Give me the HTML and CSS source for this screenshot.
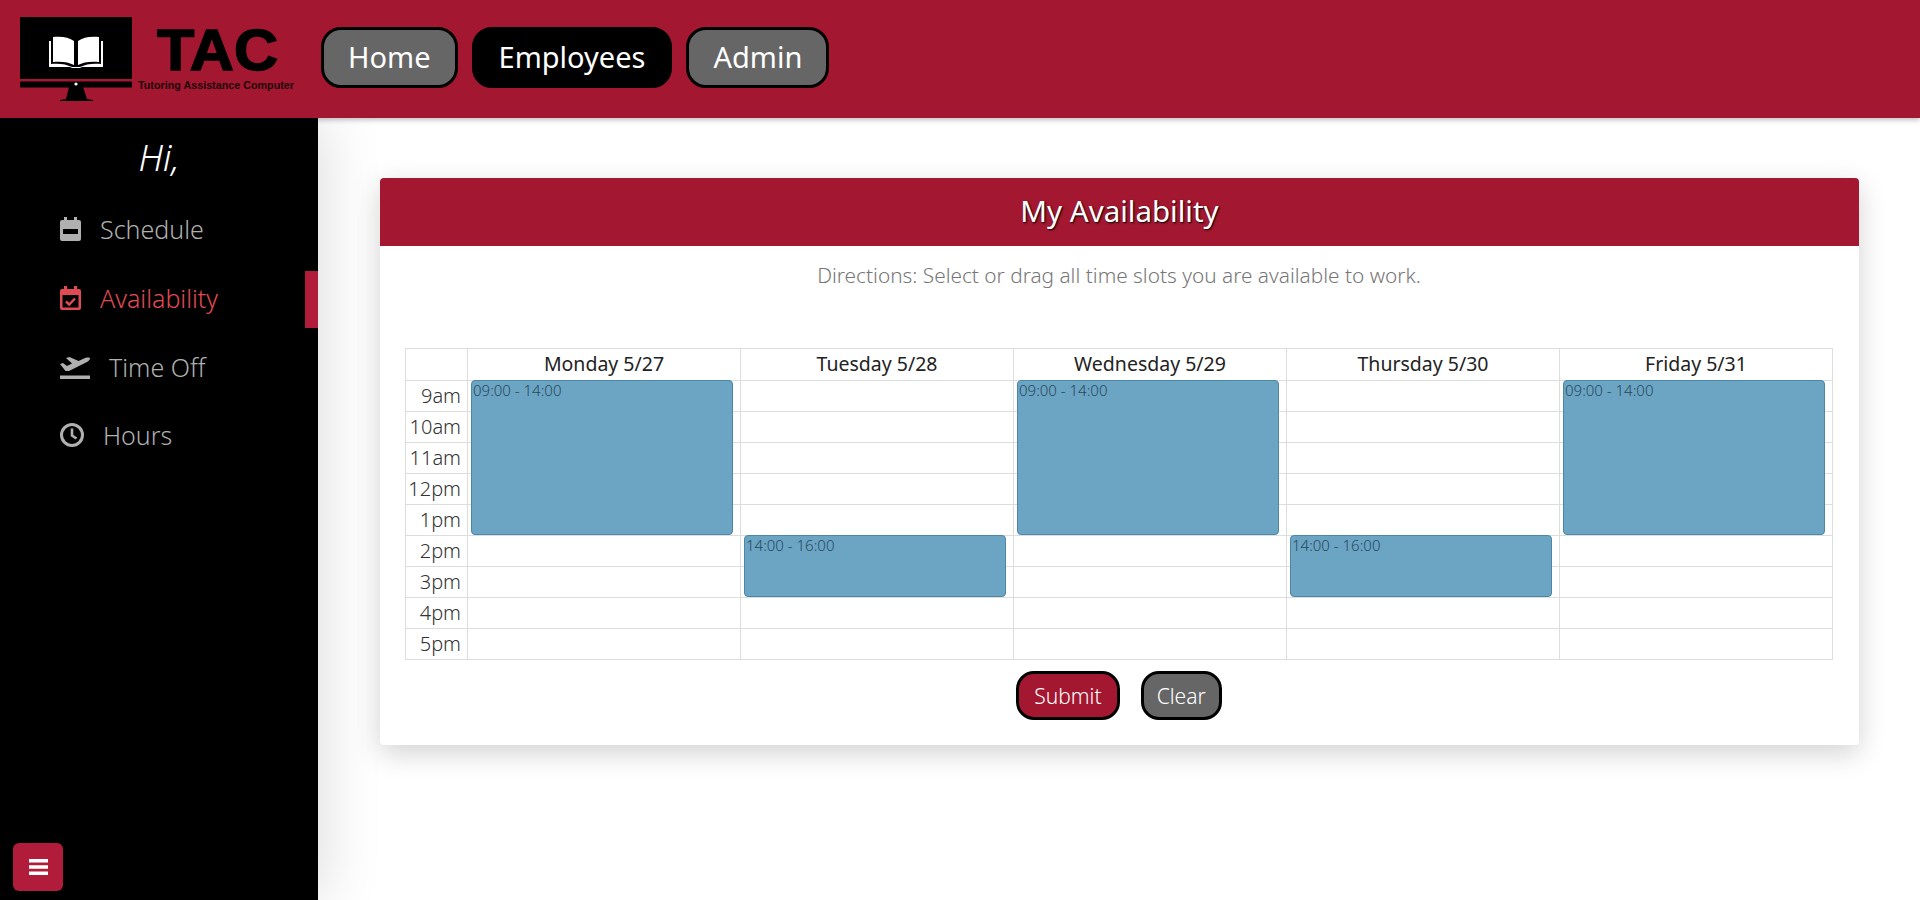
FILE: index.html
```html
<!DOCTYPE html>
<html lang="en">
<head>
  <meta charset="UTF-8" />
  <meta name="viewport" content="width=device-width, initial-scale=1.0"/>
  <title>TAC - My Availability</title>
  <link rel="stylesheet" href="styles.css">
</head>
<body>
  <header class="topbar">
    <svg class="logo" width="290" height="92" viewBox="0 0 290 92">
      <rect x="0" y="0" width="112" height="62" rx="1" fill="#000"/>
      <rect x="0" y="64.500" width="112" height="6" rx="1" fill="#000"/>
      <path d="M49 70h14l4 12 6 1v1H40v-1l6-1z" fill="#000"/>
      <circle cx="56" cy="67" r="1.600" fill="#fff"/>
      <path d="M33 20c8-1 16 0 21 4v24c-5-3-13-4-21-3z" fill="#fff"/>
      <path d="M79 20c-8-1-16 0-21 4v24c5-3 13-4 21-3z" fill="#fff"/>
      <path d="M29 24h2v23c8-1 15 0 21 3h8c6-3 13-4 21-3V24h2v26H62l-2 1h-8l-2-1H29z" fill="#fff"/>
      <text class="logo-title" x="137" y="53" textLength="121" lengthAdjust="spacingAndGlyphs">TAC</text>
      <text class="logo-sub" x="118" y="72" textLength="156" lengthAdjust="spacingAndGlyphs">Tutoring Assistance Computer</text>
    </svg>
    <nav class="topnav">
      <a class="nav-btn" href="#">Home</a>
      <a class="nav-btn active" href="#">Employees</a>
      <a class="nav-btn" href="#">Admin</a>
    </nav>
  </header>

  <div class="shell">
    <aside class="sidebar">
      <p class="greeting">Hi,</p>
      <ul class="side-menu">
        <li class="side-item">
          <svg class="side-icon" width="21" height="24" viewBox="0 0 21 24"><path d="M4 0h3v3h7V0h3v3h2a2 2 0 0 1 2 2v17a2 2 0 0 1-2 2H2a2 2 0 0 1-2-2V5a2 2 0 0 1 2-2h2z" fill="currentColor"/><rect x="3" y="12" width="15" height="5" fill="#000"/></svg>
          <span>Schedule</span>
        </li>
        <li class="side-item current">
          <svg class="side-icon" width="21" height="24" viewBox="0 0 21 24"><path d="M4 0h3v3h7V0h3v3h2a2 2 0 0 1 2 2v17a2 2 0 0 1-2 2H2a2 2 0 0 1-2-2V5a2 2 0 0 1 2-2h2zM2.500 9v12.500h16V9z" fill="currentColor" fill-rule="evenodd"/><path d="M6 15.500l3.200 3 5.800-6" fill="none" stroke="currentColor" stroke-width="2.400"/></svg>
          <span>Availability</span>
        </li>
        <li class="side-item">
          <svg class="side-icon" width="30" height="24" viewBox="0 0 30 24"><path d="M0 9l3-1 4 3 5-2.500L6 3l3.500-1 9 4L24 3.500c2-1 6-1.500 6 0 0 1.500-2 3-4 4L9 16H5.500z" fill="currentColor"/><rect x="0" y="20.500" width="30" height="3.500" fill="currentColor"/></svg>
          <span>Time Off</span>
        </li>
        <li class="side-item">
          <svg class="side-icon" width="24" height="24" viewBox="0 0 24 24"><circle cx="12" cy="12" r="10.500" fill="none" stroke="currentColor" stroke-width="3"/><path d="M12 5.500V12.500l4.500 3" fill="none" stroke="currentColor" stroke-width="2.600"/></svg>
          <span>Hours</span>
        </li>
      </ul>
      <span class="side-marker"></span>
      <button class="side-toggle" title="Toggle menu">
        <svg width="19" height="16" viewBox="0 0 19 16"><path d="M0 0h19v3.500H0zM0 6.200h19v3.500H0zM0 12.400h19v3.500H0z" fill="currentColor"/></svg>
      </button>
    </aside>

    <main class="content">
      <section class="card">
        <h1 class="card-title">My Availability</h1>
        <p class="directions">Directions: Select or drag all time slots you are available to work.</p>
        <table class="calendar">
          <thead>
            <tr>
              <th class="hour-col"></th>
              <th>Monday 5/27</th>
              <th>Tuesday 5/28</th>
              <th>Wednesday 5/29</th>
              <th>Thursday 5/30</th>
              <th>Friday 5/31</th>
            </tr>
          </thead>
          <tbody>
            <tr>
              <td class="hour">9am</td>
              <td><div class="slot five-hours">09:00 - 14:00</div></td>
              <td></td>
              <td><div class="slot five-hours">09:00 - 14:00</div></td>
              <td></td>
              <td><div class="slot five-hours">09:00 - 14:00</div></td>
            </tr>
            <tr><td class="hour">10am</td><td></td><td></td><td></td><td></td><td></td></tr>
            <tr><td class="hour">11am</td><td></td><td></td><td></td><td></td><td></td></tr>
            <tr><td class="hour">12pm</td><td></td><td></td><td></td><td></td><td></td></tr>
            <tr><td class="hour">1pm</td><td></td><td></td><td></td><td></td><td></td></tr>
            <tr>
              <td class="hour">2pm</td>
              <td></td>
              <td><div class="slot two-hours">14:00 - 16:00</div></td>
              <td></td>
              <td><div class="slot two-hours">14:00 - 16:00</div></td>
              <td></td>
            </tr>
            <tr><td class="hour">3pm</td><td></td><td></td><td></td><td></td><td></td></tr>
            <tr><td class="hour">4pm</td><td></td><td></td><td></td><td></td><td></td></tr>
            <tr><td class="hour">5pm</td><td></td><td></td><td></td><td></td><td></td></tr>
          </tbody>
        </table>
        <div class="card-actions">
          <button class="action-btn submit">Submit</button>
          <button class="action-btn clear">Clear</button>
        </div>
      </section>
    </main>
  </div>
</body>
</html>
```

FILE: styles.css
```css
* {
  box-sizing: border-box;
  font-family: "Noto Sans", sans-serif;
}

body {
  margin: 0;
  height: 900px;
  overflow: hidden;
  background: #fff;
}

/* top bar */
.topbar {
  position: relative;
  z-index: 2;
  height: 118px;
  display: flex;
  align-items: flex-start;
  padding: 17px 0 0 20px;
  background: #a31730;
  box-shadow: 0 2px 5px rgba(0,0,0,0.25);
}

.logo {
  flex: none;
  width: 290px;
}

.logo-title {
  font-family: "Liberation Sans", sans-serif;
  font-size: 58px;
  font-weight: 700;
  fill: #000;
  stroke: #000;
  stroke-width: 1.5px;
}

.logo-sub {
  font-family: "Liberation Sans", sans-serif;
  font-size: 10px;
  font-weight: 700;
  fill: #1c0508;
}

.topnav {
  display: flex;
  gap: 14px;
  margin: 10px 0 0 11px;
}

.nav-btn {
  height: 61px;
  padding: 0 24px 2px;
  display: flex;
  align-items: center;
  border: 3px solid #000;
  border-radius: 20px;
  background: #666;
  color: #fff;
  font-size: 29px;
  text-decoration: none;
}

.nav-btn.active {
  background: #000;
}

/* sidebar */
.shell {
  display: flex;
  height: 782px;
}

.sidebar {
  position: relative;
  z-index: 1;
  flex: none;
  width: 318px;
  background: #000;
  box-shadow: 0 0 60px rgba(0,0,0,0.16);
}

.greeting {
  margin: 17px 0 14px;
  text-align: center;
  color: #fff;
  font-size: 36px;
  font-style: italic;
  font-weight: 300;
  line-height: 46px;
}

.side-menu {
  list-style: none;
  margin: 0;
  padding: 0 0 0 60px;
}

.side-item {
  height: 68.700px;
  display: flex;
  align-items: center;
  gap: 19px;
  color: #b0b0b0;
  font-size: 25px;
  font-weight: 300;
}

.side-item.current {
  color: #e04a55;
}

.side-marker {
  position: absolute;
  top: 153px;
  right: 0;
  width: 13px;
  height: 57px;
  background: #b01c3a;
}

.side-toggle {
  position: absolute;
  left: 13px;
  bottom: 9px;
  width: 50px;
  height: 48px;
  display: flex;
  align-items: center;
  justify-content: center;
  border: none;
  border-radius: 6px;
  background: #b01c3a;
  color: #fff;
}

/* main card */
.content {
  flex: 1;
  padding: 60px 61px 0 62px;
}

.card {
  height: 567px;
  padding: 0 26px 0 25px;
  border-radius: 4px;
  background: #fff;
  box-shadow: 0 8px 28px rgba(0,0,0,0.18);
}

.card-title {
  margin: 0 -26px 0 -25px;
  height: 68px;
  line-height: 66px;
  text-align: center;
  background: #a31730;
  border-radius: 4px 4px 0 0;
  color: #fff;
  font-size: 29.500px;
  font-weight: 400;
  text-shadow: 1px 1px 2px #000;
}

.directions {
  margin: 14px 0 0;
  height: 88px;
  line-height: 30px;
  text-align: center;
  color: #777;
  font-size: 20.800px;
  font-weight: 300;
}

.calendar {
  width: 100%;
  table-layout: fixed;
  border-collapse: collapse;
}

.calendar th,
.calendar td {
  padding: 0;
  border: 1px solid #ddd;
}

.calendar th {
  height: 32px;
  padding-bottom: 2px;
  color: #222;
  font-size: 19.500px;
  font-weight: 400;
}

.calendar .hour-col {
  width: 62px;
}

.calendar td {
  position: relative;
  height: 31px;
}

.calendar .hour {
  padding-right: 6px;
  text-align: right;
  color: #333;
  font-size: 20px;
  font-weight: 300;
  line-height: 30px;
}

.slot {
  position: absolute;
  z-index: 1;
  top: -1px;
  left: 3px;
  right: 7px;
  padding: 1px 1px;
  border: 1px solid #4d87a6;
  border-radius: 4px;
  background: #6ca4c3;
  color: #27495c;
  font-size: 15px;
  font-weight: 300;
  line-height: 17px;
}

.five-hours {
  height: 155px;
}

.two-hours {
  height: 62px;
}

.card-actions {
  display: flex;
  justify-content: center;
  gap: 21px;
  margin-top: 11px;
}

.action-btn {
  height: 49px;
  border: 3px solid #000;
  border-radius: 18px;
  color: #fff;
  font-size: 21px;
  font-weight: 300;
}

.action-btn.submit {
  padding: 0 15px;
  background: #a31730;
}

.action-btn.clear {
  padding: 0 13px;
  background: #666;
}
```
